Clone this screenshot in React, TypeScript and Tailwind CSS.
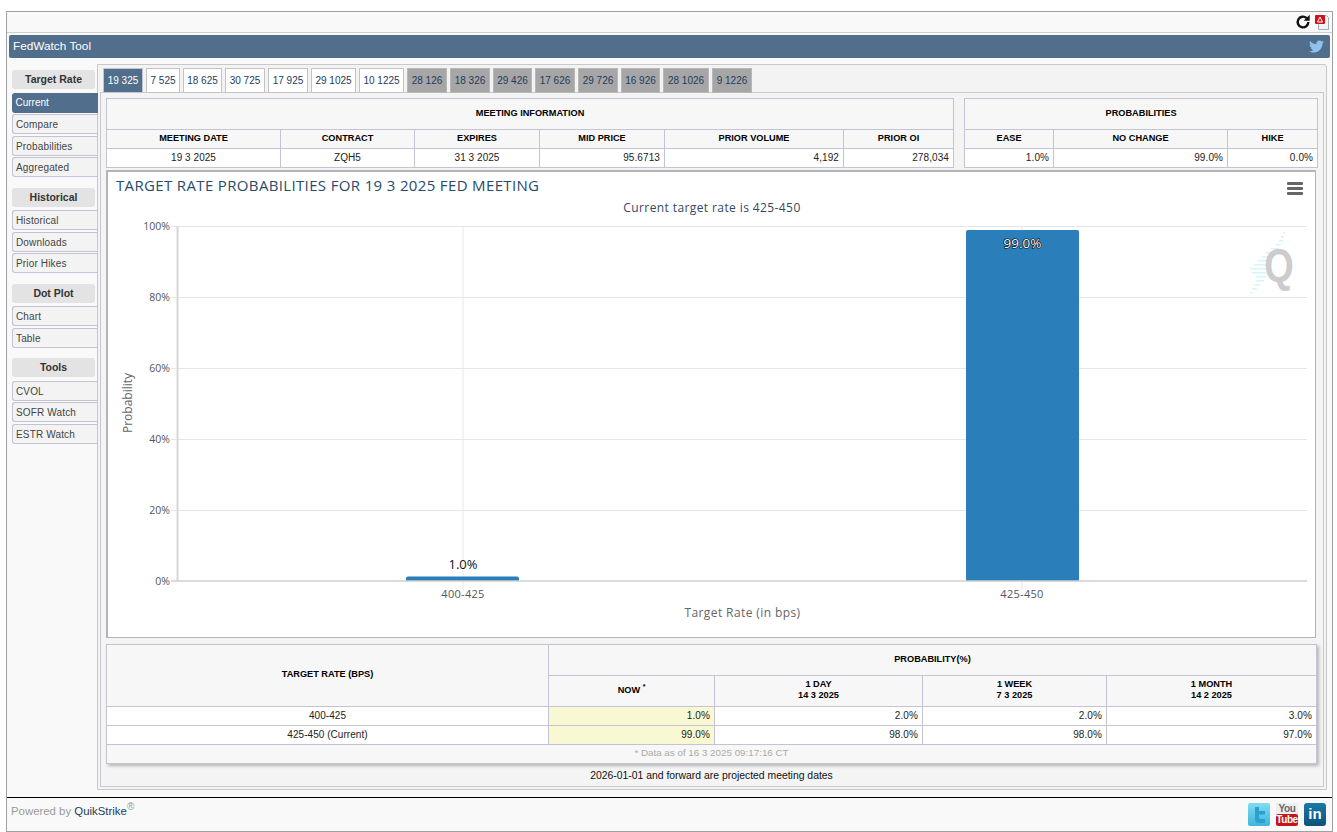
import { FaTwitter } from "react-icons/fa"

const tabs = [
    { label: "19 325", state: "active", width: "w-[40px]" },
    { label: "7 525", state: "open", width: "w-[34px]" },
    { label: "18 625", state: "open", width: "w-[39px]" },
    { label: "30 725", state: "open", width: "w-[40px]" },
    { label: "17 925", state: "open", width: "w-[40px]" },
    { label: "29 1025", state: "open", width: "w-[45px]" },
    { label: "10 1225", state: "open", width: "w-[45px]" },
    { label: "28 126", state: "later", width: "w-[40px]" },
    { label: "18 326", state: "later", width: "w-[40px]" },
    { label: "29 426", state: "later", width: "w-[39px]" },
    { label: "17 626", state: "later", width: "w-[40px]" },
    { label: "29 726", state: "later", width: "w-[40px]" },
    { label: "16 926", state: "later", width: "w-[39px]" },
    { label: "28 1026", state: "later", width: "w-[46px]" },
    { label: "9 1226", state: "later", width: "w-[40px]" },
]

const sideGroups = [
    { title: "Target Rate", items: ["Current", "Compare", "Probabilities", "Aggregated"] },
    { title: "Historical", items: ["Historical", "Downloads", "Prior Hikes"] },
    { title: "Dot Plot", items: ["Chart", "Table"] },
    { title: "Tools", items: ["CVOL", "SOFR Watch", "ESTR Watch"] },
]

const th = "border border-[#c3c3d3] bg-[#f7f7f7] text-[9.2px] leading-[11px] font-bold text-black text-center align-middle p-0 pb-[2px]"
const tdC = "border border-[#c3c3d3] bg-white text-[10px] leading-[11px] tracking-[0.05px] text-[#222] text-center align-middle p-0 pb-[2px]"
const tdR = "border border-[#c3c3d3] bg-white text-[10px] leading-[11px] tracking-[0.1px] text-[#222] text-right align-middle p-0 pb-[2px] pr-[4px]"
const tdNow = "border border-[#c3c3d3] bg-[#f8f8d2] text-[10px] leading-[11px] tracking-[0.1px] text-[#222] text-right align-middle p-0 pb-[2px] pr-[4px]"

function Sidebar() {
    return (
        <div className="w-[90px] pl-[5px] pt-[6px] flex flex-col gap-[10.5px]">
            {sideGroups.map((g) => (
                <div key={g.title}>
                    <div className="w-[83px] h-[19px] mb-[3.5px] rounded-[3px] bg-[#e3e3e3] text-[10.5px] leading-[19px] font-bold text-[#333] text-center">
                        {g.title}
                    </div>
                    <div className="flex flex-col gap-[1.5px]">
                        {g.items.map((item) =>
                            item === "Current" ? (
                                <div
                                    key={item}
                                    className="relative z-10 w-[86px] h-[20px] pl-[3.5px] rounded-l-[3px] bg-[#516e8c] text-[10px] leading-[20px] text-white"
                                >
                                    {item}
                                </div>
                            ) : (
                                <div
                                    key={item}
                                    className="w-[85px] h-[20px] pl-[3px] rounded-l-[3px] border border-r-0 border-[#c3c3d3] bg-[#f3f3f3] text-[10px] leading-[20px] tracking-[0.15px] text-[#444]"
                                >
                                    {item}
                                </div>
                            )
                        )}
                    </div>
                </div>
            ))}
        </div>
    )
}

function Tabs() {
    return (
        <div className="flex gap-[3px] pl-[5px] pt-[2.5px] h-[27px]">
            {tabs.map((t) =>
                t.state === "active" ? (
                    <div key={t.label} className={`${t.width} h-[25px] bg-[#516e8c] border border-[#c3c3d3] text-center text-[10px] leading-[23px] text-white`}>
                        {t.label}
                    </div>
                ) : t.state === "open" ? (
                    <div key={t.label} className={`${t.width} h-[25px] bg-white border border-[#c3c3c3] text-center text-[10px] leading-[23px] text-[#1d3d5c]`}>
                        {t.label}
                    </div>
                ) : (
                    <div key={t.label} className={`${t.width} h-[25px] bg-[#a6a6a6] border border-[#b8b8b8] text-center text-[10px] leading-[23px] text-[#1d3d5c]`}>
                        {t.label}
                    </div>
                )
            )}
        </div>
    )
}

function InfoTables() {
    return (
        <div className="flex gap-[10px]">
            <table className="w-[847px] table-fixed border-collapse">
                <colgroup>
                    <col className="w-[174px]" />
                    <col className="w-[134px]" />
                    <col className="w-[125px]" />
                    <col className="w-[125px]" />
                    <col className="w-[179px]" />
                    <col className="w-[110px]" />
                </colgroup>
                <tbody>
                    <tr className="h-[31px]">
                        <th colSpan={6} className={th}>MEETING INFORMATION</th>
                    </tr>
                    <tr className="h-[19px]">
                        <th className={th}>MEETING DATE</th>
                        <th className={th}>CONTRACT</th>
                        <th className={th}>EXPIRES</th>
                        <th className={th}>MID PRICE</th>
                        <th className={th}>PRIOR VOLUME</th>
                        <th className={th}>PRIOR OI</th>
                    </tr>
                    <tr className="h-[19px]">
                        <td className={tdC}>19 3 2025</td>
                        <td className={tdC}>ZQH5</td>
                        <td className={tdC}>31 3 2025</td>
                        <td className={tdR}>95.6713</td>
                        <td className={tdR}>4,192</td>
                        <td className={tdR}>278,034</td>
                    </tr>
                </tbody>
            </table>
            <table className="w-[353px] table-fixed border-collapse">
                <colgroup>
                    <col className="w-[89px]" />
                    <col className="w-[174px]" />
                    <col className="w-[90px]" />
                </colgroup>
                <tbody>
                    <tr className="h-[31px]">
                        <th colSpan={3} className={th}>PROBABILITIES</th>
                    </tr>
                    <tr className="h-[19px]">
                        <th className={th}>EASE</th>
                        <th className={th}>NO CHANGE</th>
                        <th className={th}>HIKE</th>
                    </tr>
                    <tr className="h-[19px]">
                        <td className={tdR}>1.0%</td>
                        <td className={tdR}>99.0%</td>
                        <td className={tdR}>0.0%</td>
                    </tr>
                </tbody>
            </table>
        </div>
    )
}

// chart drawn in page coordinates, offset by the viewBox
function Chart() {
    const grid = [
        { y: 226, label: "100%" },
        { y: 297, label: "80%" },
        { y: 368, label: "60%" },
        { y: 439, label: "40%" },
        { y: 510, label: "20%" },
    ]
    const stripes = [
        [1283, 232, 2], [1281, 236, 3], [1279, 240, 4], [1276, 244, 5], [1271, 248, 8],
        [1266, 252, 10], [1262, 256, 12], [1258, 260, 12], [1254, 264, 14], [1250, 268, 16],
        [1252, 272, 14], [1256, 276, 10], [1256, 280, 8], [1254, 284, 6], [1252, 288, 5], [1250, 292, 3],
    ]
    const font = "'Open Sans', sans-serif"
    return (
        <div className="mt-[2px] w-[1210px] h-[468px] border-2 border-[#b4b4b4] border-r border-b bg-white">
            <svg width="1207" height="465" viewBox="108 172 1207 465" className="block">
                {grid.map((g) => (
                    <g key={g.y}>
                        <line x1="178" x2="1307" y1={g.y + 0.5} y2={g.y + 0.5} stroke="#e6e6e6" />
                        <line x1="171" x2="178" y1={g.y + 0.5} y2={g.y + 0.5} stroke="#e6e6e6" />
                        <text x="170" y={g.y + 4} textAnchor="end" fontSize="10.5" fill="#555" fontFamily={font}>{g.label}</text>
                    </g>
                ))}
                <text x="170" y="585" textAnchor="end" fontSize="10.5" fill="#555" fontFamily={font}>0%</text>
                <line x1="463" x2="463" y1="226" y2="590" stroke="#e6e6e6" />
                <line x1="1022" x2="1022" y1="226" y2="590" stroke="#e6e6e6" />
                <line x1="177.5" x2="177.5" y1="226" y2="581" stroke="#d8d8d8" strokeWidth="2" />
                <path d="M406 581v-2.5a2 2 0 0 1 2-2h109a2 2 0 0 1 2 2v2.5z" fill="#2a7fba" />
                <path d="M966 581V232a2 2 0 0 1 2-2h109a2 2 0 0 1 2 2v349z" fill="#2a7fba" />
                <line x1="171" x2="1307" y1="581" y2="581" stroke="#cfcfcf" strokeWidth="1.5" />
                <text x="116" y="190.5" fontSize="15" fill="#274b6d" fontFamily={font} letterSpacing="0.35">
                    TARGET RATE PROBABILITIES FOR 19 3 2025 FED MEETING
                </text>
                <text x="712" y="212" textAnchor="middle" fontSize="12" fill="#34495e" fontFamily={font} letterSpacing="0.4">
                    Current target rate is 425-450
                </text>
                <text x="463" y="569" textAnchor="middle" fontSize="13" fill="#111" fontFamily={font}>1.0%</text>
                <text x="1022.5" y="247.5" textAnchor="middle" fontSize="13.5" fill="#fff" stroke="#000" strokeWidth="1.2" paintOrder="stroke" fontFamily={font}>99.0%</text>
                <text x="463" y="598" textAnchor="middle" fontSize="11" fill="#555" fontFamily={font} letterSpacing="0.3">400-425</text>
                <text x="1022" y="598" textAnchor="middle" fontSize="11" fill="#555" fontFamily={font} letterSpacing="0.3">425-450</text>
                <text x="742.5" y="617" textAnchor="middle" fontSize="12" fill="#666" fontFamily={font} letterSpacing="0.4">Target Rate (in bps)</text>
                <text transform="translate(131.5 403) rotate(-90)" textAnchor="middle" fontSize="12" fill="#666" fontFamily={font}>Probability</text>
                {/* hamburger menu */}
                <g fill="#666">
                    <rect x="1287" y="182" width="16" height="3" rx="1" />
                    <rect x="1287" y="187" width="16" height="3" rx="1" />
                    <rect x="1287" y="192" width="16" height="3" rx="1" />
                </g>
                {/* QuikStrike watermark */}
                <g fill="#d6f4fd">
                    {stripes.map(([x, y, w]) => (
                        <rect key={y} x={x} y={y} width={w} height="1.5" />
                    ))}
                </g>
                <text transform="translate(1279 281) scale(1 1.2)" textAnchor="middle" fontSize="38" fontWeight="700" fill="#cccccc" fontFamily="'Liberation Sans', sans-serif">Q</text>
            </svg>
        </div>
    )
}

function ProbabilityTable() {
    return (
        <table className="mt-[6px] w-[1210px] table-fixed border-collapse shadow-[2px_2px_3px_rgba(0,0,0,0.25)]">
            <colgroup>
                <col className="w-[442px]" />
                <col className="w-[166px]" />
                <col className="w-[208px]" />
                <col className="w-[184px]" />
                <col className="w-[210px]" />
            </colgroup>
            <tbody>
                <tr className="h-[31px]">
                    <th rowSpan={2} className={th}>TARGET RATE (BPS)</th>
                    <th colSpan={4} className={th}>PROBABILITY(%)</th>
                </tr>
                <tr className="h-[31px]">
                    <th className={th}>
                        NOW <sup className="text-[7px]">*</sup>
                    </th>
                    <th className={th}>1 DAY<br />14 3 2025</th>
                    <th className={th}>1 WEEK<br />7 3 2025</th>
                    <th className={th}>1 MONTH<br />14 2 2025</th>
                </tr>
                <tr className="h-[19px]">
                    <td className={tdC}>400-425</td>
                    <td className={tdNow}>1.0%</td>
                    <td className={tdR}>2.0%</td>
                    <td className={tdR}>2.0%</td>
                    <td className={tdR}>3.0%</td>
                </tr>
                <tr className="h-[19px]">
                    <td className={tdC}>425-450 (Current)</td>
                    <td className={tdNow}>99.0%</td>
                    <td className={tdR}>98.0%</td>
                    <td className={tdR}>98.0%</td>
                    <td className={tdR}>97.0%</td>
                </tr>
                <tr className="h-[19px]">
                    <td colSpan={5} className="border border-[#c3c3d3] bg-[#f7f7f7] text-[9.8px] leading-[11px] text-[#aaa] text-center align-middle p-0 pb-[3px]">
                        * Data as of 16 3 2025 09:17:16 CT
                    </td>
                </tr>
            </tbody>
        </table>
    )
}

function SocialIcons() {
    return (
        <div className="flex gap-[6px] pr-[6px]">
            <svg width="22" height="23" viewBox="0 0 22 23">
                <defs>
                    <linearGradient id="tw" x1="0" y1="0" x2="0" y2="1">
                        <stop offset="0" stopColor="#7fdcf2" />
                        <stop offset="1" stopColor="#3fb4dd" />
                    </linearGradient>
                </defs>
                <rect width="22" height="23" rx="2" fill="url(#tw)" />
                <path d="M7 4h4v4h6v3.5h-6v3a1.5 1.5 0 0 0 1.5 1.5H17V20h-6a4 4 0 0 1-4-4z" fill="#2aa0cf" />
            </svg>
            <div className="flex flex-col w-[22px] h-[23px] items-center">
                <div className="h-[11px] w-full text-[10px] leading-[11px] font-bold text-[#666] text-center tracking-[-0.4px] bg-[#eee]">You</div>
                <div className="h-[12px] w-full text-[10px] leading-[12px] font-bold text-white text-center tracking-[-0.4px] bg-[#c4161c] rounded-[2px]">Tube</div>
            </div>
            <div className="w-[22px] h-[23px] rounded-[3px] bg-gradient-to-b from-[#1b79a8] to-[#0c5378] text-white text-[15px] leading-[22px] font-bold text-center">
                in
            </div>
        </div>
    )
}

export default function App() {
    return (
        <div className="w-[1337px] h-[832px] overflow-hidden bg-white pt-[11px] pl-[6px] font-['Liberation_Sans',Arial,sans-serif]">
            <div className="w-[1327px] h-[821px] border border-b-0 border-[#a0a0a0] bg-[#f9f9f9]">
                {/* top bar */}
                <div className="h-[21px] border-b border-[#cfcfcf] flex justify-end items-center gap-[4px] pr-[3px]">
                    <svg width="16" height="16" viewBox="0 0 24 24" fill="none" stroke="#111" strokeWidth="3.6">
                        <path d="M20 12a8 8 0 1 1-2.6-5.9" />
                        <path d="M22 1v9h-9z" fill="#111" stroke="none" />
                    </svg>
                    <svg width="14" height="15" viewBox="0 0 14 15">
                        <path d="M3.5.5h8l2 2v12h-10z" fill="#f1f5f7" stroke="#9fb0b8" />
                        <rect x="0" y="0" width="10" height="9" rx="1" fill="#d3101a" />
                        <path d="M5 2l2.5 5h-5z" fill="none" stroke="#fff" />
                    </svg>
                </div>
                {/* title bar */}
                <div className="mt-[2px] mx-[2px] h-[23px] rounded-[2px] bg-[#516e8c] flex items-center justify-between pl-[4px] pr-[6px]">
                    <span className="text-[11.8px] text-white">FedWatch Tool</span>
                    <FaTwitter className="text-[#8fc3ec] text-[15px]" />
                </div>
                <div className="mt-[6px] flex h-[726px]">
                    <Sidebar />
                    <div className="w-[1230px] h-[726px] border border-[#c8c8c8] rounded-tr-[3px] bg-[#f3f3f3]">
                        <Tabs />
                        <div className="ml-[2px] w-[1224px] h-[695px] border border-[#c8c8d0] bg-[#f4f4f4] pl-[5px] pt-[5px]">
                            <InfoTables />
                            <Chart />
                            <ProbabilityTable />
                            <div className="w-[1211px] pt-[3.5px] text-center text-[10.4px] text-[#111]">
                                2026-01-01 and forward are projected meeting dates
                            </div>
                        </div>
                    </div>
                </div>
                {/* footer */}
                <div className="mt-[7px] h-[35px] pt-[5px] border-t border-b border-t-black border-b-[#a0a0a0] flex items-start justify-between pl-[4px]">
                    <span className="text-[11.4px] leading-[14px] font-normal text-[#999] mt-[1px]">
                        Powered by <span className="text-[#1d3d5c]">QuikStrike</span>
                        <sup className="text-[10px] text-[#999]">®</sup>
                    </span>
                    <SocialIcons />
                </div>
            </div>
        </div>
    )
}
